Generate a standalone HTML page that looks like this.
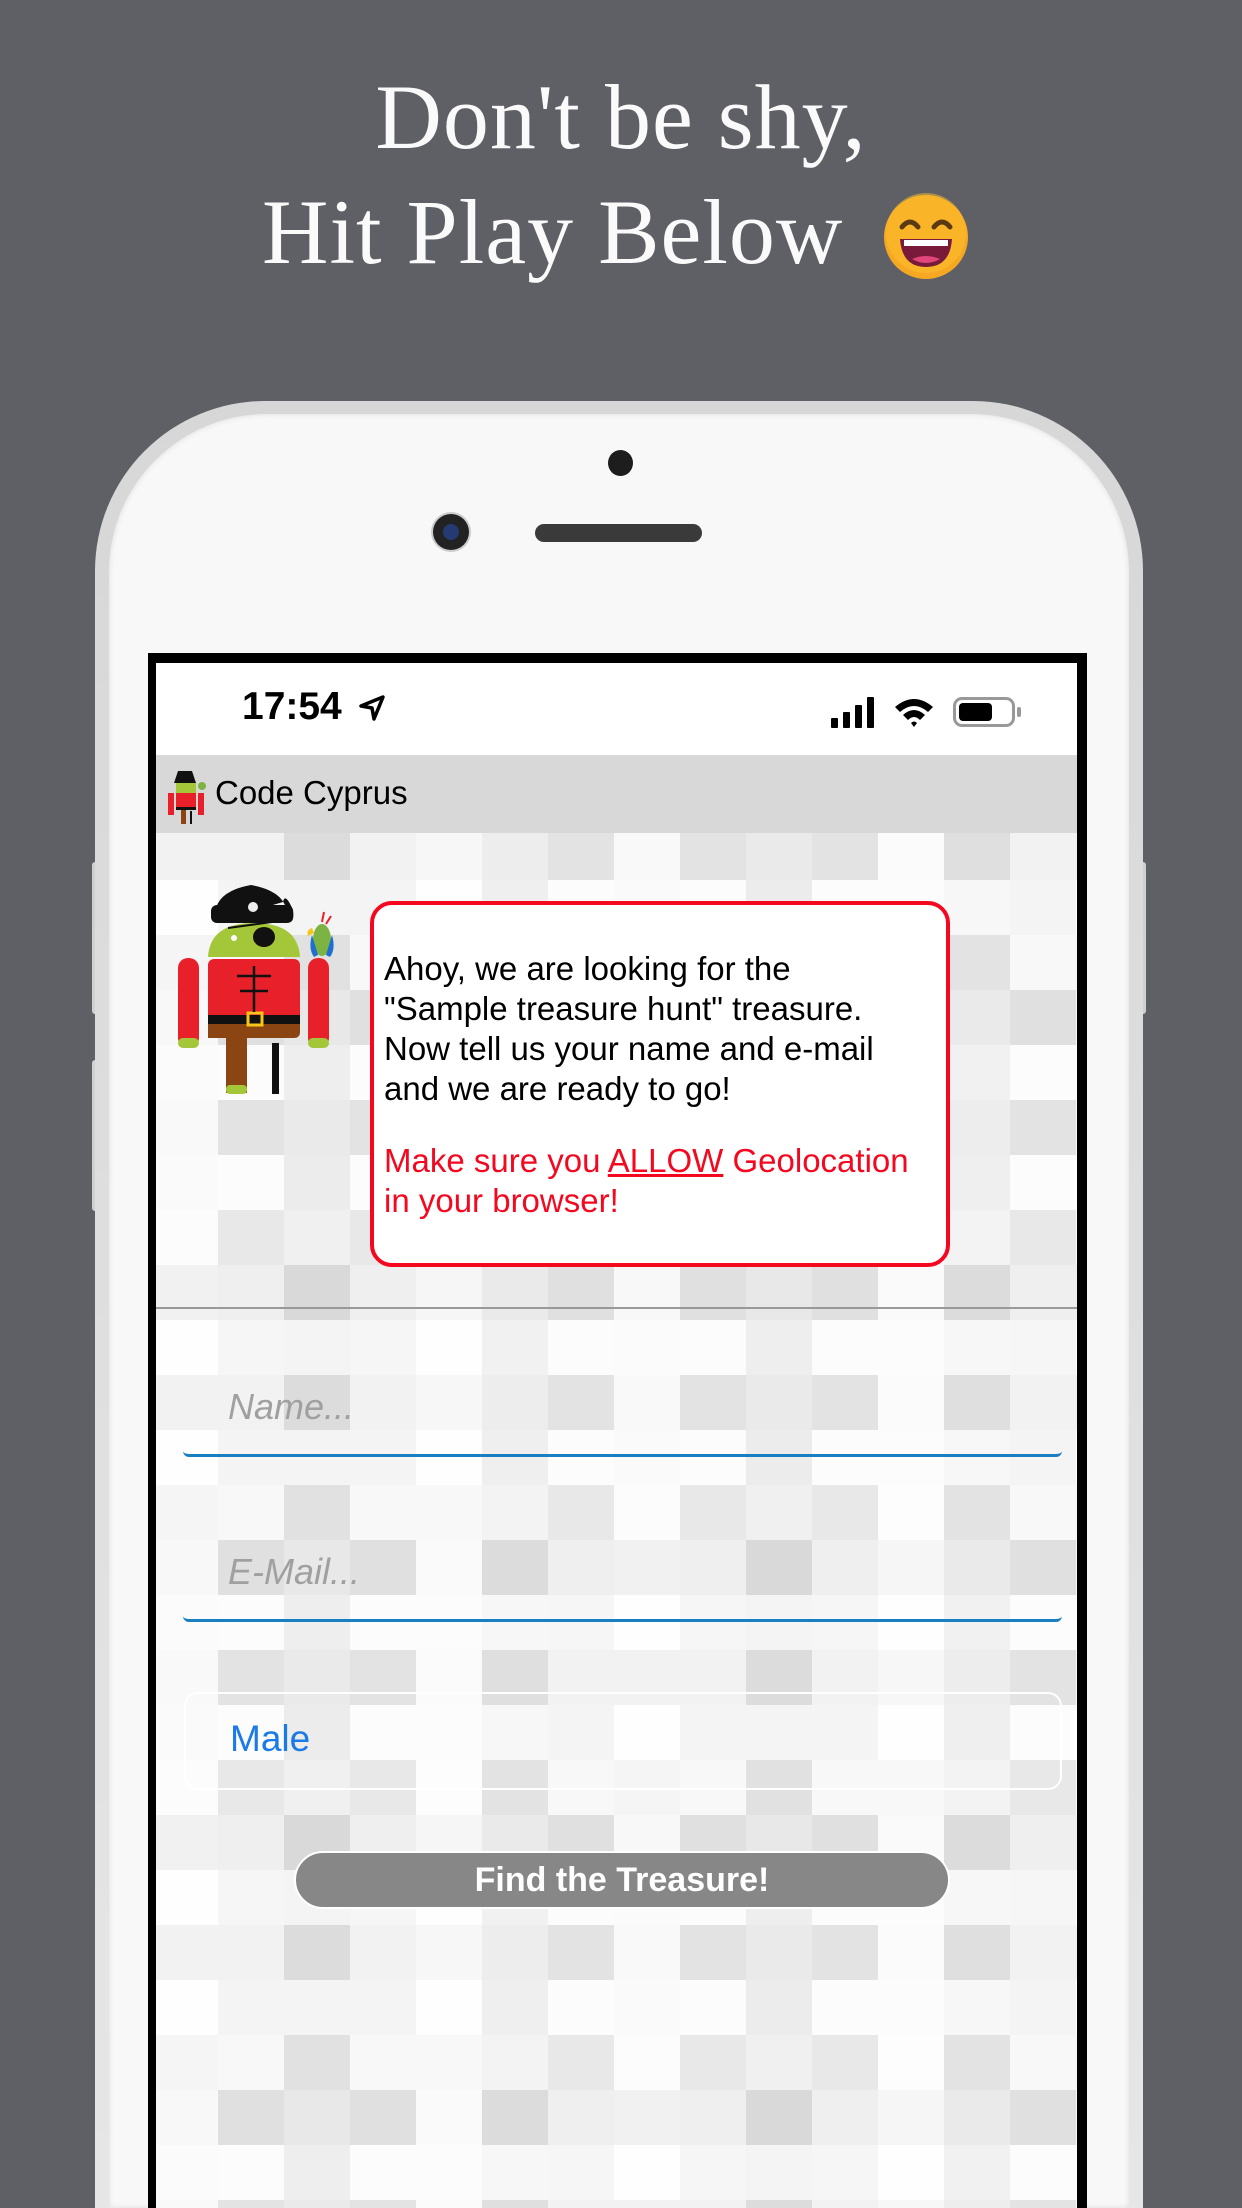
<!DOCTYPE html>
<html><head><meta charset="utf-8"><style>
*{margin:0;padding:0;box-sizing:border-box}
html,body{width:1242px;height:2208px;overflow:hidden;background:#5f6066;font-family:"Liberation Sans",sans-serif;position:relative}
.abs{position:absolute}
.title{position:absolute;left:0;width:1242px;text-align:center;color:#fafafa;font-family:"Liberation Serif",serif;font-size:92px;letter-spacing:1px}
.phone{left:95px;top:401px;width:1048px;height:1807px;border-radius:170px 170px 0 0;background:linear-gradient(#d7d7d7,#e6e6e6);}
.bezel{left:109px;top:414px;width:1020px;height:1794px;border-radius:158px 158px 0 0;background:#f8f8f8;box-shadow:inset 0 0 6px #ddd}
.screen{left:148px;top:653px;width:939px;height:1555px;background:#000}
.inner{left:156px;top:663px;width:921px;height:1545px;background:#fff;overflow:hidden}
.grid{left:0;top:170px;width:921px;height:1400px;background-color:#f0f0f0;
background-image:
linear-gradient(90deg,rgba(255,255,255,.55) 0 66px,transparent 66px 132px,rgba(0,0,0,.03) 132px 198px,transparent 198px 264px,rgba(255,255,255,.7) 264px 330px,rgba(0,0,0,.02) 330px 396px,transparent 396px 462px),
linear-gradient(rgba(0,0,0,.025) 0 55px,rgba(255,255,255,.5) 55px 110px,transparent 110px 165px,rgba(0,0,0,.035) 165px 220px,rgba(255,255,255,.6) 220px 275px),
conic-gradient(rgba(0,0,0,.03) 25%,rgba(255,255,255,.5) 0 50%,rgba(0,0,0,.03) 0 75%,rgba(255,255,255,.5) 0);
background-size:462px 100%,100% 275px,132px 110px;background-position:-4px 0,0 -8px,62px -8px}
</style></head><body>
<div class="title" style="top:62px;line-height:110px">Don't be shy,</div>
<div class="title" style="top:177px;line-height:110px;text-align:left;left:262px;width:auto">Hit Play Below</div>
<svg class="abs" style="left:882px;top:193px" width="88" height="88" viewBox="0 0 88 88">
<circle cx="44" cy="44" r="42" fill="#f7a823"/><circle cx="44" cy="40" r="40" fill="#fbc02d" opacity=".5"/>
<path d="M20 34 q8-10 16 0" stroke="#5a3a10" stroke-width="5" fill="none" stroke-linecap="round"/>
<path d="M52 34 q8-10 16 0" stroke="#5a3a10" stroke-width="5" fill="none" stroke-linecap="round"/>
<path d="M18 46 h52 q-2 28 -26 28 q-24 0 -26 -28z" fill="#7a1a3a"/>
<path d="M22 47 h44 v6 h-44z" fill="#fff"/><path d="M30 66 q14 8 28 0 q-14-6 -28 0z" fill="#e0467a"/>
</svg>
<div class="abs" style="left:92px;top:862px;width:6px;height:152px;background:#d0d0d0;border-radius:3px"></div>
<div class="abs" style="left:92px;top:1060px;width:6px;height:151px;background:#d0d0d0;border-radius:3px"></div>
<div class="abs" style="left:1140px;top:862px;width:6px;height:152px;background:#d0d0d0;border-radius:3px"></div>
<div class="abs phone"></div>
<div class="abs bezel"></div>
<div class="abs" style="left:608px;top:450px;width:25px;height:26px;border-radius:50%;background:#1d1d1d"></div>
<div class="abs" style="left:433px;top:514px;width:36px;height:36px;border-radius:50%;background:#222;box-shadow:0 0 0 2px #ccc"><div style="margin:10px;width:16px;height:16px;border-radius:50%;background:#243a70"></div></div>
<div class="abs" style="left:535px;top:524px;width:167px;height:18px;border-radius:9px;background:#3a3a3a"></div>
<div class="abs screen"></div>
<div class="abs inner">
 <div class="abs" style="left:86px;top:22px;font-size:39px;font-weight:bold;color:#000">17:54</div>
 <svg class="abs" style="left:201px;top:30px" width="30" height="30" viewBox="0 0 30 30"><path d="M4 13 L26 4 L17 26 L15 15 Z" fill="none" stroke="#000" stroke-width="3.5" stroke-linejoin="round"/></svg>
 <div class="abs" style="left:675px;top:55px;width:7px;height:10px;background:#000;border-radius:1px"></div>
 <div class="abs" style="left:687px;top:49px;width:7px;height:16px;background:#000;border-radius:1px"></div>
 <div class="abs" style="left:699px;top:42px;width:7px;height:23px;background:#000;border-radius:1px"></div>
 <div class="abs" style="left:711px;top:34px;width:7px;height:31px;background:#000;border-radius:1px"></div>
 <svg class="abs" style="left:737px;top:33px" width="42" height="32" viewBox="0 0 42 32"><path d="M2 11 Q21 -5 40 11 L35 16 Q21 4 7 16Z" fill="#000"/><path d="M10 19 Q21 9 32 19 L27 24 Q21 18 15 24Z" fill="#000"/><path d="M18 27 Q21 24 24 27 L21 31Z" fill="#000"/></svg>
 <div class="abs" style="left:797px;top:34px;width:62px;height:30px;border:3px solid #999;border-radius:9px"><div style="margin:3px;width:33px;height:18px;background:#000;border-radius:4px"></div></div>
 <div class="abs" style="left:861px;top:44px;width:4px;height:10px;background:#999;border-radius:2px"></div>
 <div class="abs" style="left:0;top:92px;width:921px;height:79px;background:#d8d8d8"></div>
 <svg class="abs" style="left:10px;top:104px" width="42" height="58" viewBox="0 0 42 58"><path d="M12 4 h14 l4 12 h-22z" fill="#111"/><rect x="10" y="16" width="20" height="10" fill="#a4c639"/><rect x="10" y="26" width="20" height="16" fill="#e8202a"/><rect x="2" y="26" width="6" height="22" fill="#e8202a"/><rect x="32" y="26" width="6" height="22" fill="#e8202a"/><rect x="10" y="40" width="20" height="3" fill="#111"/><rect x="15" y="43" width="5" height="14" fill="#8b4513"/><rect x="24" y="44" width="2" height="13" fill="#111"/><circle cx="36" cy="19" r="4" fill="#7cb342"/></svg>
 <div class="abs" style="left:59px;top:111px;font-size:33px;color:#000">Code Cyprus</div>
 <div class="abs grid"></div>
 <div class="abs" style="left:0;top:644px;width:921px;height:2px;background:#999"></div>
 <div class="abs" style="left:27px;top:698px;width:879px;height:96px;border-bottom:3px solid #1a7fc0;border-radius:0 0 6px 6px"></div>
 <div class="abs" style="left:72px;top:723px;font-size:36px;font-style:italic;color:#a0a0a0">Name...</div>
 <div class="abs" style="left:27px;top:862px;width:879px;height:97px;border-bottom:3px solid #1a7fc0;border-radius:0 0 6px 6px"></div>
 <div class="abs" style="left:72px;top:888px;font-size:36px;font-style:italic;color:#a0a0a0">E-Mail...</div>
 <div class="abs" style="left:28px;top:1029px;width:878px;height:98px;border:2px solid #fff;border-radius:14px"></div>
 <div class="abs" style="left:74px;top:1055px;font-size:37px;color:#1a7ae8">Male</div>
 <div class="abs" style="left:138px;top:1188px;width:656px;height:58px;border:2px solid #fff;border-radius:29px;background:#878787;color:#fff;font-weight:bold;font-size:34px;text-align:center;line-height:54px">Find the Treasure!</div>
</div>
<svg class="abs" style="left:176px;top:883px" width="160" height="215" viewBox="176 883 160 215">
<path d="M215 922 q-4-30 36-37 q40 7 36 37 q8 2 6-12 q-8-18 -10-8 z" fill="#111"/>
<rect x="211" y="905" width="82" height="18" rx="6" fill="#111"/>
<circle cx="253" cy="907" r="5" fill="#eee"/>
<path d="M208 957 q2-34 46-34 q44 0 46 34z" fill="#a4c639"/>
<circle cx="234" cy="938" r="3" fill="#fff"/>
<path d="M228 928 l44 -6" stroke="#111" stroke-width="2"/><ellipse cx="264" cy="937" rx="11" ry="10" fill="#111"/>
<rect x="208" y="959" width="92" height="78" rx="6" fill="#e8202a"/>
<rect x="208" y="1015" width="92" height="9" fill="#111"/>
<path d="M208 1024 h92 v8 q0 6 -6 6 h-86z" fill="#8b4513"/>
<rect x="248" y="1013" width="14" height="12" fill="none" stroke="#f5c518" stroke-width="3"/>
<path d="M254 966 v46 M237 976 h34 M240 991 h28" stroke="#111" stroke-width="2.5"/>
<rect x="178" y="958" width="21" height="90" rx="10" fill="#e8202a"/><rect x="178" y="1038" width="21" height="10" rx="5" fill="#a4c639"/>
<rect x="308" y="958" width="21" height="90" rx="10" fill="#e8202a"/><rect x="308" y="1038" width="21" height="10" rx="5" fill="#a4c639"/>
<rect x="226" y="1036" width="21" height="57" fill="#8b4513"/><rect x="226" y="1085" width="21" height="9" rx="4" fill="#a4c639"/>
<rect x="272" y="1043" width="7" height="51" fill="#111"/>
<ellipse cx="322" cy="940" rx="9" ry="16" fill="#7cb342"/><path d="M312 935 q-4 14 2 22 l4-2z" fill="#1e6fd0"/><path d="M332 935 q4 14 -2 22 l-4-2z" fill="#1e6fd0"/>
<path d="M312 928 q-6 2 -4 8 l6-3z" fill="#f5c518"/><path d="M322 922 l2-10 M326 924 l5-8" stroke="#e8202a" stroke-width="2"/>
</svg>
<div class="abs" style="left:370px;top:901px;width:580px;height:366px;border:4px solid #f4081f;border-radius:22px;background:#fff"></div>
<div class="abs" style="left:384px;top:949px;width:566px;font-size:33px;line-height:40px;color:#000;white-space:nowrap">Ahoy, we are looking for the<br>"Sample treasure hunt" treasure.<br>Now tell us your name and e-mail<br>and we are ready to go!</div>
<div class="abs" style="left:384px;top:1141px;width:566px;font-size:33px;line-height:40px;color:#f4081f;white-space:nowrap">Make sure you <u>ALLOW</u> Geolocation<br>in your browser!</div>
</body></html>
